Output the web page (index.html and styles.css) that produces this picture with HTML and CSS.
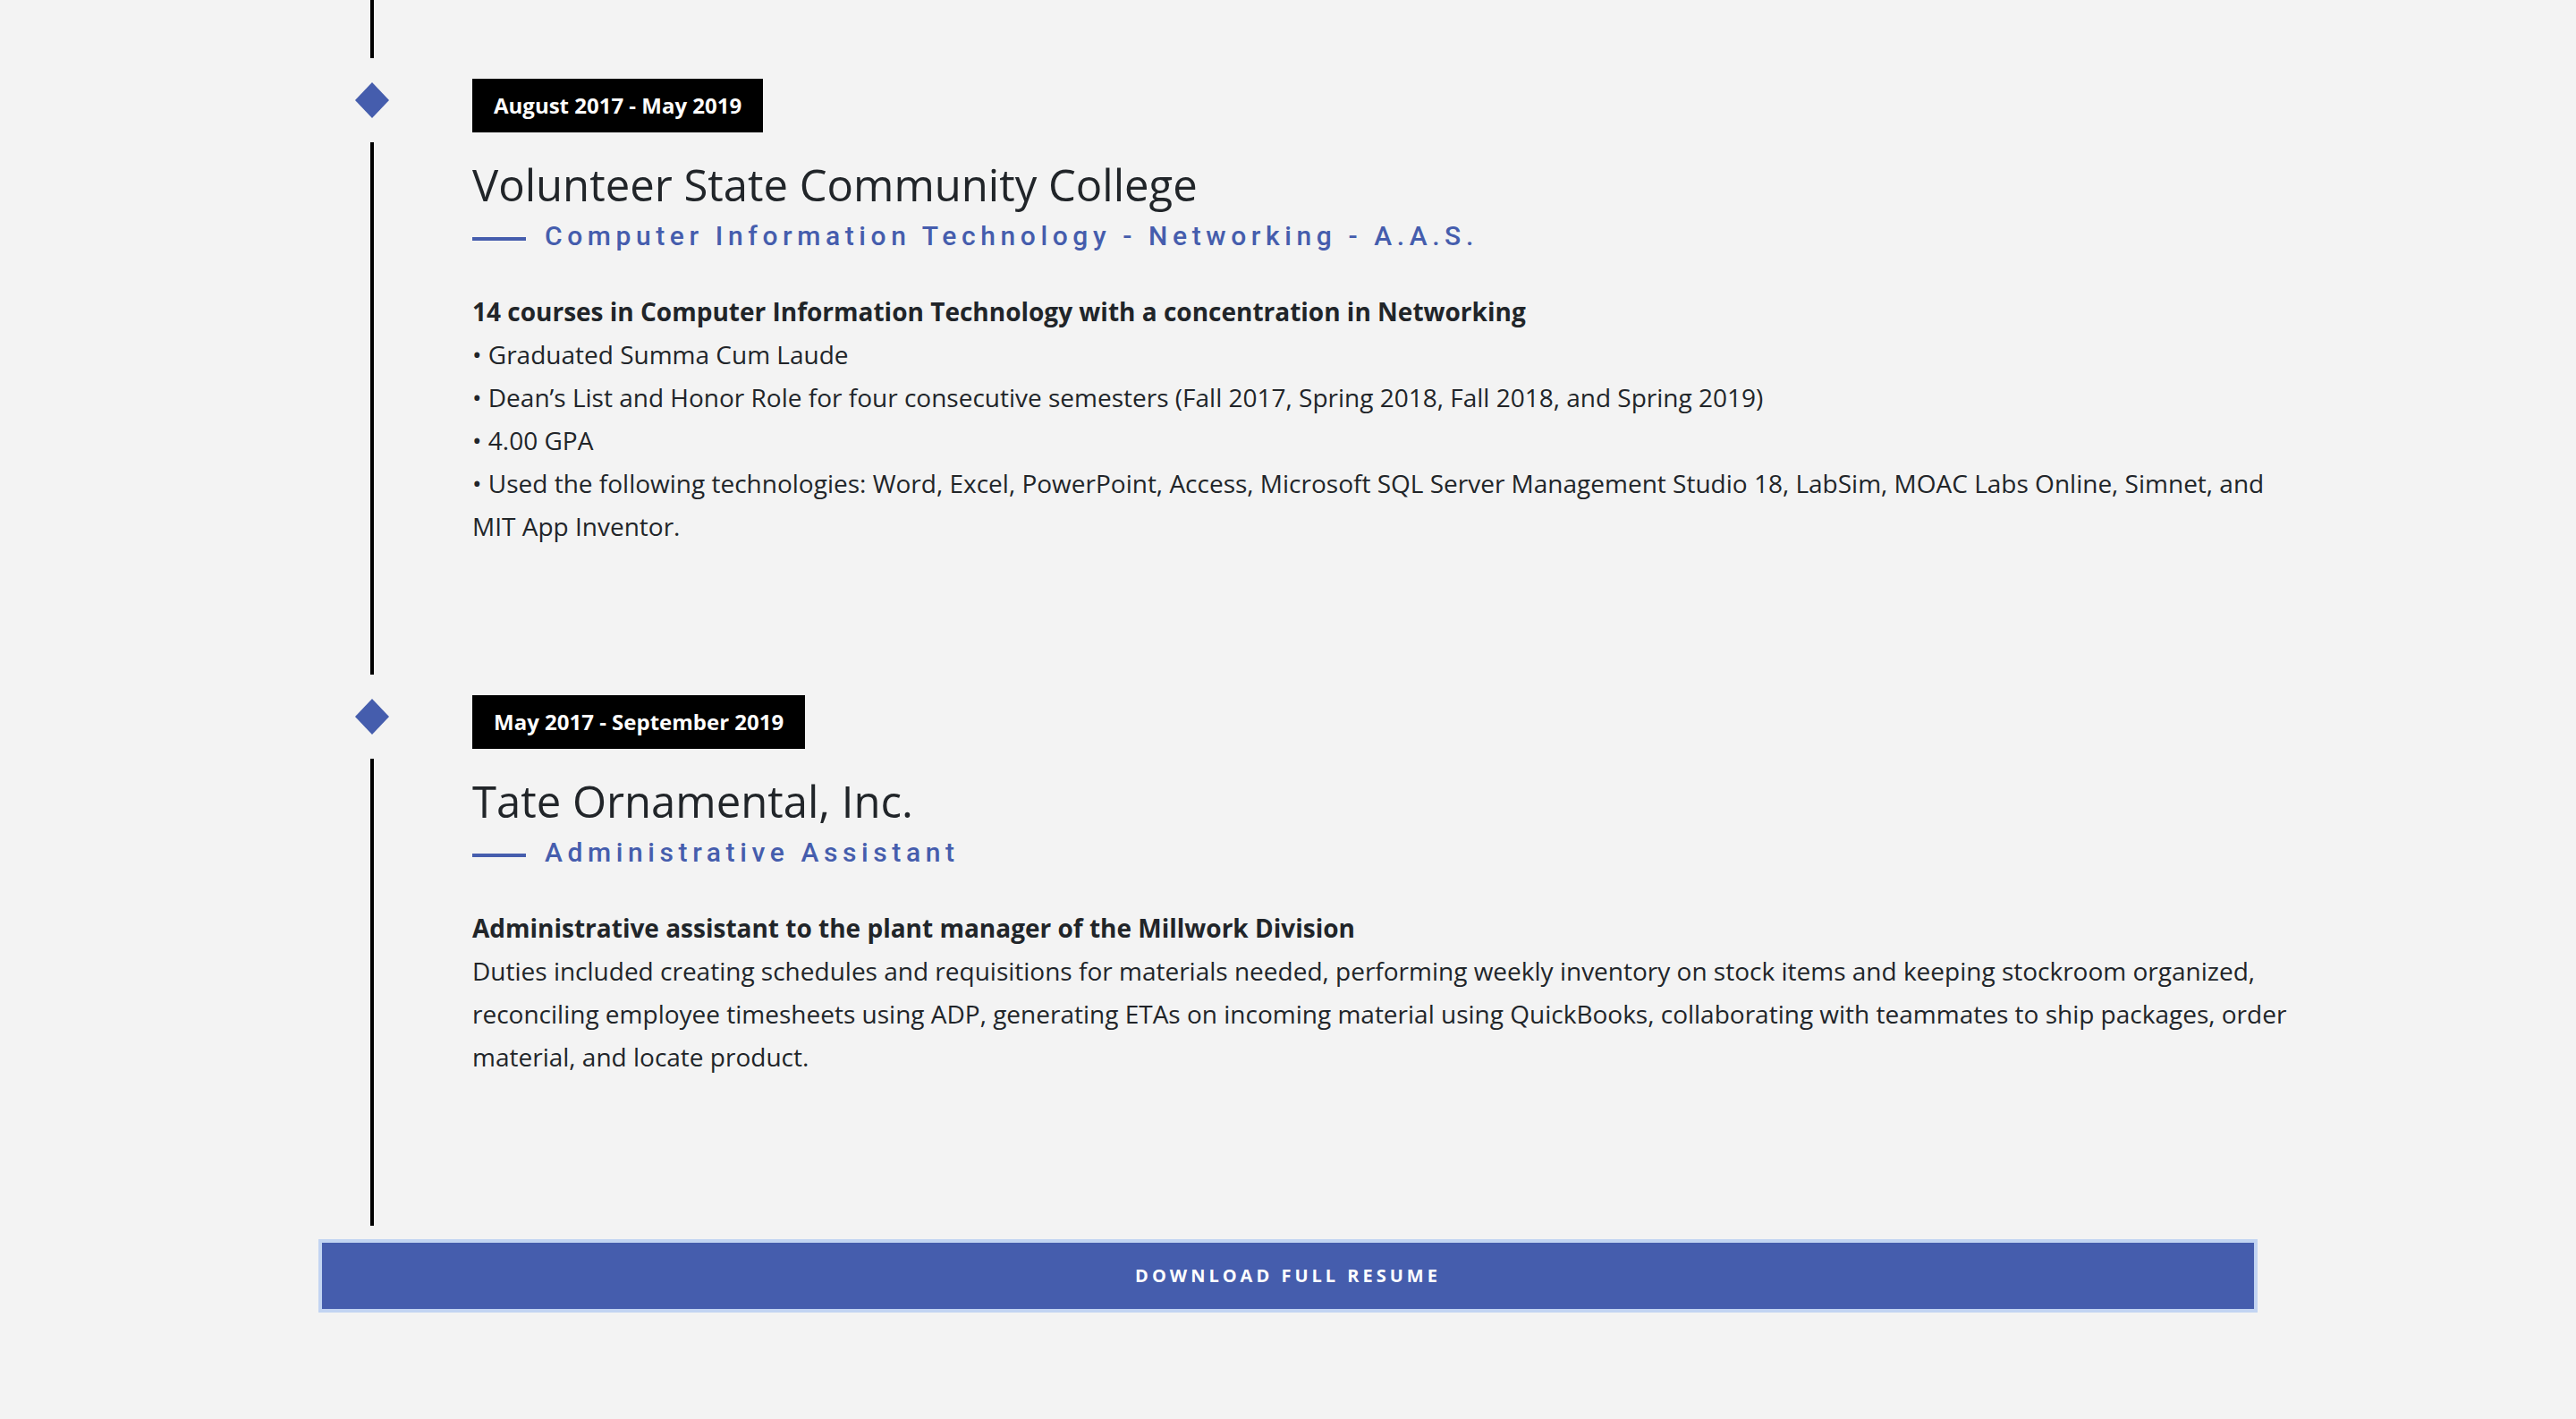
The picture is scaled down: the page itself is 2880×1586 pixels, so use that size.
FILE: index.html
```html
<!DOCTYPE html>
<html lang="en">
<head>
<meta charset="utf-8">
<title>Resume</title>
<link rel="stylesheet" href="styles.css">
</head>
<body>
<main class="resume">
  <section class="timeline">
    <article class="entry">
      <div class="marker">
        <svg class="diamond" viewBox="0 0 38 40" width="38" height="40"><polygon points="19,0 38,20 19,40 0,20" fill="#455dad"/></svg>
      </div>
      <div class="entry-body">
        <span class="date">August 2017 - May 2019</span>
        <h2 class="place">Volunteer State Community College</h2>
        <h3 class="role"><span class="rule"></span><span class="role-text">Computer Information Technology - Networking - A.A.S.</span></h3>
        <div class="desc">
          <p class="lead">14 courses in Computer Information Technology with a concentration in Networking</p>
          <p>• Graduated Summa Cum Laude</p>
          <p>• Dean’s List and Honor Role for four consecutive semesters (Fall 2017, Spring 2018, Fall 2018, and Spring 2019)</p>
          <p>• 4.00 GPA</p>
          <p>• Used the following technologies: Word, Excel, PowerPoint, Access, Microsoft SQL Server Management Studio 18, LabSim, MOAC Labs Online, Simnet, and MIT App Inventor.</p>
        </div>
      </div>
    </article>
    <article class="entry">
      <div class="marker">
        <svg class="diamond" viewBox="0 0 38 40" width="38" height="40"><polygon points="19,0 38,20 19,40 0,20" fill="#455dad"/></svg>
      </div>
      <div class="entry-body">
        <span class="date">May 2017 - September 2019</span>
        <h2 class="place">Tate Ornamental, Inc.</h2>
        <h3 class="role"><span class="rule"></span><span class="role-text">Administrative Assistant</span></h3>
        <div class="desc">
          <p class="lead">Administrative assistant to the plant manager of the Millwork Division</p>
          <p>Duties included creating schedules and requisitions for materials needed, performing weekly inventory on stock items and keeping stockroom organized, reconciling employee timesheets using ADP, generating ETAs on incoming material using QuickBooks, collaborating with teammates to ship packages, order material, and locate product.</p>
        </div>
      </div>
    </article>
  </section>
  <a class="download" href="#">Download Full Resume</a>
</main>
</body>
</html>
```

FILE: styles.css
```css
html, body {
  margin: 0;
  padding: 0;
  background: #f3f3f3;
}
body {
  font-family: "Open Sans", "Liberation Sans", sans-serif;
  color: #212529;
}
.resume {
  width: 2168px;
  margin: 0 auto;
  padding-bottom: 120px;
}
.timeline {
  margin-right: -52px;
  padding-top: 88px;
  background: linear-gradient(#000, #000) 58px 0 / 4px 100% no-repeat;
}
.entry {
  display: grid;
  grid-template-columns: 120px 1fr;
  column-gap: 52px;
  padding-bottom: 165px;
}
.marker {
  height: 94px;
  margin-top: -23px;
  display: flex;
  align-items: center;
  justify-content: center;
  background: #f3f3f3;
  width: 40px;
  justify-self: center;
}
.diamond {
  display: block;
}
.entry-body {
  display: flex;
  flex-direction: column;
  align-items: flex-start;
}
.date {
  display: inline-block;
  background: #000;
  color: #fff;
  font-weight: 700;
  font-size: 24px;
  line-height: 35px;
  padding: 12px 24px 13px;
}
.place {
  margin: 29px 0 0;
  font-weight: 400;
  font-size: 49px;
  line-height: 59px;
  color: #212529;
}
.role {
  margin: 10px 0 0;
  display: flex;
  align-items: center;
  font-family: "Roboto", "Liberation Sans", sans-serif;
  font-weight: 500;
  font-size: 30px;
  line-height: 36px;
  letter-spacing: 5.6px;
  color: #455dad;
}
.rule {
  width: 60px;
  height: 4px;
  margin-top: 5px;
  margin-right: 21px;
  background: #455dad;
}
.desc {
  margin-top: 42px;
  font-size: 28px;
  line-height: 48px;
}
.desc p {
  margin: 0;
}
.desc .lead {
  font-weight: 700;
}
.download {
  display: block;
  margin-top: 15px;
  height: 74px;
  line-height: 74px;
  border: 4px solid #c2d4f2;
  background: #455dad;
  color: #fff;
  text-align: center;
  text-decoration: none;
  text-transform: uppercase;
  font-weight: 700;
  font-size: 20px;
  letter-spacing: 4px;
}
```
